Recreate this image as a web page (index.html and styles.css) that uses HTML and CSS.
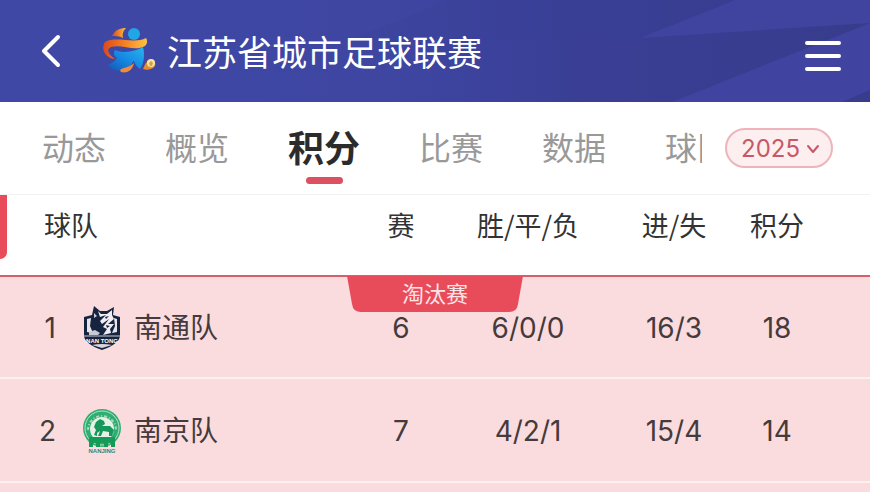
FILE: index.html
```
<!DOCTYPE html>
<html lang="zh-CN">
<head>
  <meta charset="UTF-8">
  <meta name="viewport" content="width=device-width, initial-scale=1">
  <title>江苏省城市足球联赛</title>
  <link rel="stylesheet" href="styles.css">
</head>
<body>
<header class="header">
  <svg class="header-bg" viewBox="0 0 870 102" preserveAspectRatio="none" aria-hidden="true">
    <defs>
      <linearGradient id="shade" x1="0" x2="1" y1="0" y2="0">
        <stop offset="0" stop-color="#4048a6"/>
        <stop offset="0.45" stop-color="#3e46a2"/>
        <stop offset="0.65" stop-color="#3a3f96"/>
        <stop offset="1" stop-color="#383c8c"/>
      </linearGradient>
    </defs>
    <rect width="870" height="102" fill="url(#shade)"/>
    <path d="M350 40L450 0H735L640 38Z" fill="#393e92" opacity="0.25"/>
    <path d="M640 38L735 0H870V23Z" fill="#40449f"/>
    <path d="M672 102L870 23V102Z" fill="#4044a0"/>
    <path d="M842 102L870 90V102Z" fill="#383c8c"/>
  </svg>
  <button class="icon-btn" aria-label="返回">
    <svg width="20" height="34" viewBox="0 0 20 34" fill="none" stroke="#fff" stroke-width="4" stroke-linecap="round" stroke-linejoin="round">
      <path d="M17 3L3 17L17 31"/>
    </svg>
  </button>
  <svg class="league-logo" width="54" height="48" viewBox="0 0 54 48" aria-hidden="true">
    <defs>
      <linearGradient id="ribbon" x1="0" x2="1" y1="0" y2="0">
        <stop offset="0" stop-color="#d9481f"/>
        <stop offset="0.5" stop-color="#f58222"/>
        <stop offset="1" stop-color="#fcc347"/>
      </linearGradient>
      <linearGradient id="figure" x1="0" x2="1" y1="1" y2="0">
        <stop offset="0" stop-color="#1454b4"/>
        <stop offset="0.5" stop-color="#158be4"/>
        <stop offset="1" stop-color="#28b5ec"/>
      </linearGradient>
    </defs>
    <path d="M9 9C12 3 17 1 23 1C20 4 19 7 20 11C16 9 13 9 9 9Z" fill="url(#ribbon)"/>
    <circle cx="31" cy="7" r="6" fill="#1fa6e4"/>
    <path d="M12 23C20 27 33 24 40 20C42 28 41 36 37 42C34 40 32 37 31 34C29 35 29 38 25 41C19 46 10 44 5 38C9 36 12 34 14 31C11 29 10 26 12 23Z" fill="url(#figure)"/>
    <path d="M2 15C12 9 32 17 43 11C45 14 44 17 42 19C32 25 19 17 8 20C3 22 5 27 12 32C3 32-3 22 2 15Z" fill="url(#ribbon)"/>
    <path d="M17 43C21 40 26 41 31 36C30 42 25 47 18 45Z" fill="#f08a3c"/>
    <path d="M40 42C42 38 43 33 49 32C54 34 53 41 48 42C45 43 43 43 40 42Z" fill="#e98b28"/>
    <circle cx="48" cy="36" r="4" fill="#f6e2a0"/>
    <path d="M46 36L48 34L50 36L49 39H47Z" fill="#d0a04d"/>
  </svg>
  <h1 class="title">江苏省城市足球联赛</h1>
  <button class="icon-btn menu-btn" aria-label="菜单">
    <svg width="36" height="32" viewBox="0 0 36 32" stroke="#fff" stroke-width="4" stroke-linecap="round">
      <path d="M2 3H34M2 16H34M2 29H34"/>
    </svg>
  </button>
</header>

<div class="nav">
  <nav class="tabs">
    <a href="#news">动态</a>
    <a href="#overview">概览</a>
    <a href="#points" class="active" aria-current="page">积分</a>
    <a href="#matches">比赛</a>
    <a href="#data">数据</a>
    <a href="#teams">球队</a>
  </nav>
  <div class="season">
    <select class="season-select" aria-label="赛季">
      <option>2025</option>
    </select>
    <svg class="season-arrow" width="14" height="10" viewBox="0 0 14 10" fill="none" stroke="#c65868" stroke-width="2" stroke-linecap="round" stroke-linejoin="round" aria-hidden="true">
      <path d="M2 2L7 8L12 2"/>
    </svg>
  </div>
</div>

<main class="standings">
  <span class="side-mark"></span>
  <span class="stage">
    <svg class="stage-shape" viewBox="0 0 176 36" preserveAspectRatio="none" aria-hidden="true">
      <path d="M0 0H176L171 28Q170 36 162 36H14Q6 36 5 28Z" fill="#e84c5b"/>
    </svg>
    <span class="stage-text">淘汰赛</span>
  </span>
  <table class="table">
    <colgroup>
      <col class="col-rank">
      <col class="col-team">
      <col class="col-played">
      <col class="col-record">
      <col class="col-goals">
      <col class="col-points">
    </colgroup>
    <thead>
      <tr>
        <th class="team-head" colspan="2">球队</th>
        <th>赛</th>
        <th>胜/平/负</th>
        <th>进/失</th>
        <th class="points">积分</th>
      </tr>
    </thead>
    <tbody>
      <tr class="first">
        <td class="rank">1</td>
        <td>
          <div class="team">
            <svg width="38" height="46" viewBox="0 0 38 46" aria-hidden="true">
              <path d="M1 12L9 10L11 1L17 6L24 6L31 2L30 10L37 12V31Q36 39 19 45Q2 39 1 31Z" fill="#17243f"/>
              <path d="M4 14L8 13L7 21L10 28L4 27Z" fill="#e8e4ea"/>
              <path d="M34 14L31 13L32 21L29 28L34 27Z" fill="#e8e4ea"/>
              <path d="M29 5L24 9L18 9L15 6L17 12L23 10L17 16L19 19L26 14L20 22L24 24L20 30L28 28L27 24L31 19L25 19L31 14L29 10Z" fill="#f1edf2"/>
              <path d="M11 8L14 11L11 13ZM6 27L12 25L17 28L15 30H6Z" fill="#c8cbd6"/>
              <path d="M22 12L26 11L23 14ZM23 20L27 21L24 23Z" fill="#17243f"/>
              <path d="M1 31H37" stroke="#c8cbd6"/>
              <text class="crest-text" x="19" y="38" text-anchor="middle" fill="#fff">NAN TONG</text>
              <path d="M9 40Q19 38 29 40L19 43Z" fill="#d7d5df"/>
            </svg>
            <span>南通队</span>
          </div>
        </td>
        <td>6</td>
        <td>6/0/0</td>
        <td>16/3</td>
        <td class="points">18</td>
      </tr>
      <tr>
        <td class="rank">2</td>
        <td>
          <div class="team">
            <svg width="38" height="46" viewBox="0 0 38 46" aria-hidden="true">
              <circle cx="19" cy="20" r="19" fill="#2fae72"/>
              <circle cx="19" cy="20" r="17" fill="none" stroke="#b9dfc8"/>
              <path d="M5 22A14 14 0 0 1 33 22" fill="none" stroke="#a5dabc" stroke-width="2" stroke-dasharray="3 2 1 2"/>
              <circle cx="19" cy="21" r="12" fill="#e6f1e6"/>
              <path d="M11 27L13 22L11 19L13 14L17 11L21 13L22 16L19 18L27 18L31 22L29 28H26L26 24L20 23L18 28H15L17 23L14 25V28Z" fill="#16975c"/>
              <path d="M6 29H32V39H28V36Q26 33 25 36V39H21V36Q19 33 17 36V39H13V36Q12 33 10 36V39H6Z" fill="#149b58"/>
              <text class="crest-text" x="19" y="45" text-anchor="middle" fill="#36856a">NANJING</text>
            </svg>
            <span>南京队</span>
          </div>
        </td>
        <td>7</td>
        <td>4/2/1</td>
        <td>15/4</td>
        <td class="points">14</td>
      </tr>
    </tbody>
  </table>
</main>
</body>
</html>
```
FILE: styles.css
```
* {
  box-sizing: border-box;
}

body {
  margin: 0;
  min-height: 100vh;
  display: flex;
  flex-direction: column;
  font-family: "Inter", "Noto Sans CJK SC", sans-serif;
  color: #333;
  background: #fadcde;
}

/* top bar */
.header {
  position: relative;
  display: flex;
  align-items: center;
  height: 102px;
  padding: 0 29px 0 41px;
  background: #3e46a2;
}

.header-bg {
  position: absolute;
  top: 0;
  left: 0;
  width: 100%;
  height: 100%;
}

.header > :not(.header-bg) {
  position: relative;
}

.icon-btn {
  display: flex;
  padding: 0;
  border: none;
  background: none;
  cursor: pointer;
}

.league-logo {
  margin-left: 42px;
}

.title {
  margin: 0 0 0 10px;
  padding-top: 4px;
  font-size: 35px;
  line-height: 48px;
  font-weight: 400;
  color: #fff;
  white-space: nowrap;
}

.menu-btn {
  margin-left: auto;
  padding-top: 10px;
}

/* tabs */
.nav {
  display: flex;
  align-items: center;
  height: 93px;
  padding: 0 37px 0 42px;
  background: #fff;
  border-bottom: 1px solid #f2f2f2;
}

.tabs {
  flex: 1;
  display: flex;
  align-items: center;
  gap: 59px;
  height: 100%;
  overflow: hidden;
}

.tabs a {
  position: relative;
  flex: none;
  display: flex;
  align-items: center;
  height: 100%;
  padding-bottom: 4px;
  font-size: 32px;
  color: #999;
  text-decoration: none;
}

.tabs .active {
  font-size: 36px;
  font-weight: 700;
  color: #2b2b2b;
}

.tabs .active::after {
  content: "";
  position: absolute;
  left: 50%;
  bottom: 10px;
  width: 37px;
  height: 7px;
  margin-left: -18px;
  border-radius: 4px;
  background: #dc5061;
}

.season {
  position: relative;
  margin-left: 23px;
}

.season-select {
  appearance: none;
  display: block;
  width: 108px;
  height: 40px;
  padding: 0 0 0 14px;
  border: 2px solid #eeb4bc;
  border-radius: 20px;
  background: #fdeeef;
  font-family: inherit;
  font-size: 24px;
  color: #c65868;
}

.season-arrow {
  position: absolute;
  top: 16px;
  right: 13px;
  pointer-events: none;
}

/* standings table */
.standings {
  position: relative;
  flex: 1;
}

.side-mark {
  position: absolute;
  top: 0;
  left: 0;
  width: 7px;
  height: 64px;
  border-radius: 0 0 7px 0;
  background: #e84c5b;
}

.stage {
  position: absolute;
  top: 81px;
  left: 50%;
  width: 176px;
  height: 36px;
  margin-left: -88px;
  text-align: center;
}

.stage-shape {
  position: absolute;
  left: 0;
  width: 100%;
  height: 100%;
}

.stage-text {
  position: relative;
  font-size: 22px;
  line-height: 36px;
  color: #fde4e6;
}

.table {
  width: 100%;
  table-layout: fixed;
  border-collapse: separate;
  border-spacing: 0;
  font-size: 28px;
  line-height: 40px;
}

.col-rank {
  width: 83px;
}

.col-played {
  width: 102px;
}

.col-record {
  width: 152px;
}

.col-goals {
  width: 140px;
}

.col-points {
  width: 126px;
}

.table th {
  height: 80px;
  padding: 0 0 20px;
  font-family: "Noto Sans CJK SC", sans-serif;
  font-size: 27px;
  font-weight: 400;
  background: #fff;
}

.table .team-head {
  padding-left: 44px;
  text-align: left;
}

.table td {
  height: 104px;
  padding: 2px 0 0;
  text-align: center;
  color: #453a3c;
  border-bottom: 2px solid #fdf0f1;
}

.table .first td {
  border-top: 2px solid #d65f6c;
}

.table .rank {
  padding-right: 27px;
  text-align: right;
}

.table .points {
  padding-right: 60px;
}

.team {
  display: flex;
  align-items: center;
  gap: 13px;
}

.crest-text {
  font-family: "Liberation Sans", sans-serif;
  font-size: 6px;
  font-weight: 700;
}
```
